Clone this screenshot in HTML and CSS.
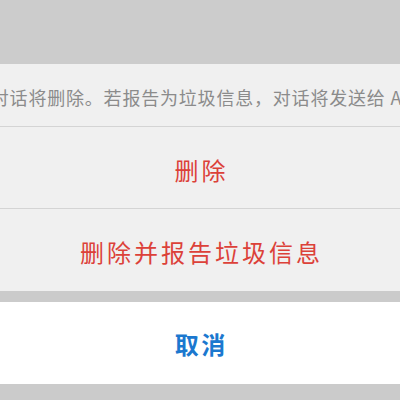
FILE: index.html
```html
<!DOCTYPE html>
<html lang="zh-CN">
<head>
<meta charset="utf-8">
<link rel="stylesheet" href="styles.css">
</head>
<body>
<div class="screen">
  <div class="dim"></div>
  <div class="sheet">
    <div class="message"><span class="message-text">此对话将删除。若报告为垃圾信息，对话将发送给 Apple。</span></div>
    <div class="action danger">删除</div>
    <div class="action danger">删除并报告垃圾信息</div>
  </div>
  <div class="gap"></div>
  <div class="cancel">取消</div>
  <div class="dim-bottom"></div>
</div>
</body>
</html>
```
FILE: styles.css
```css
html, body {
  margin: 0;
  padding: 0;
  background: #cbcbcb;
}
.screen {
  width: 400px;
  height: 400px;
  overflow: hidden;
  display: flex;
  flex-direction: column;
  font-family: "Noto Sans CJK SC", "Noto Sans", sans-serif;
}
.dim {
  height: 64px;
  flex: none;
  background: #cccccc;
}
.sheet {
  background: #f0f0f0;
  display: flex;
  flex-direction: column;
  flex: none;
}
.message {
  height: 63px;
  box-sizing: border-box;
  padding-top: 3px;
  border-bottom: 1px solid #d4d4d4;
  display: flex;
  align-items: center;
  overflow: hidden;
  white-space: nowrap;
}
.message-text {
  margin-left: -28px;
  font-size: 18px;
  letter-spacing: 0.8px;
  color: #8b8b8b;
  flex: none;
}
.action {
  height: 81px;
  box-sizing: border-box;
  padding-top: 3px;
  display: flex;
  align-items: center;
  justify-content: center;
  font-size: 24px;
  letter-spacing: 3px;
  padding-left: 3px;
  color: #dc4139;
}
.action + .action {
  border-top: 1px solid #d4d4d4;
  height: 83px;
}
.gap {
  height: 11px;
  flex: none;
  background: #cbcbcb;
}
.cancel {
  height: 82px;
  flex: none;
  background: #ffffff;
  display: flex;
  align-items: center;
  justify-content: center;
  font-size: 24px;
  font-weight: 700;
  letter-spacing: 2.5px;
  padding-left: 2.5px;
  color: #1b78cf;
}
.dim-bottom {
  flex: 1;
  background: #cbcbcb;
}
```
